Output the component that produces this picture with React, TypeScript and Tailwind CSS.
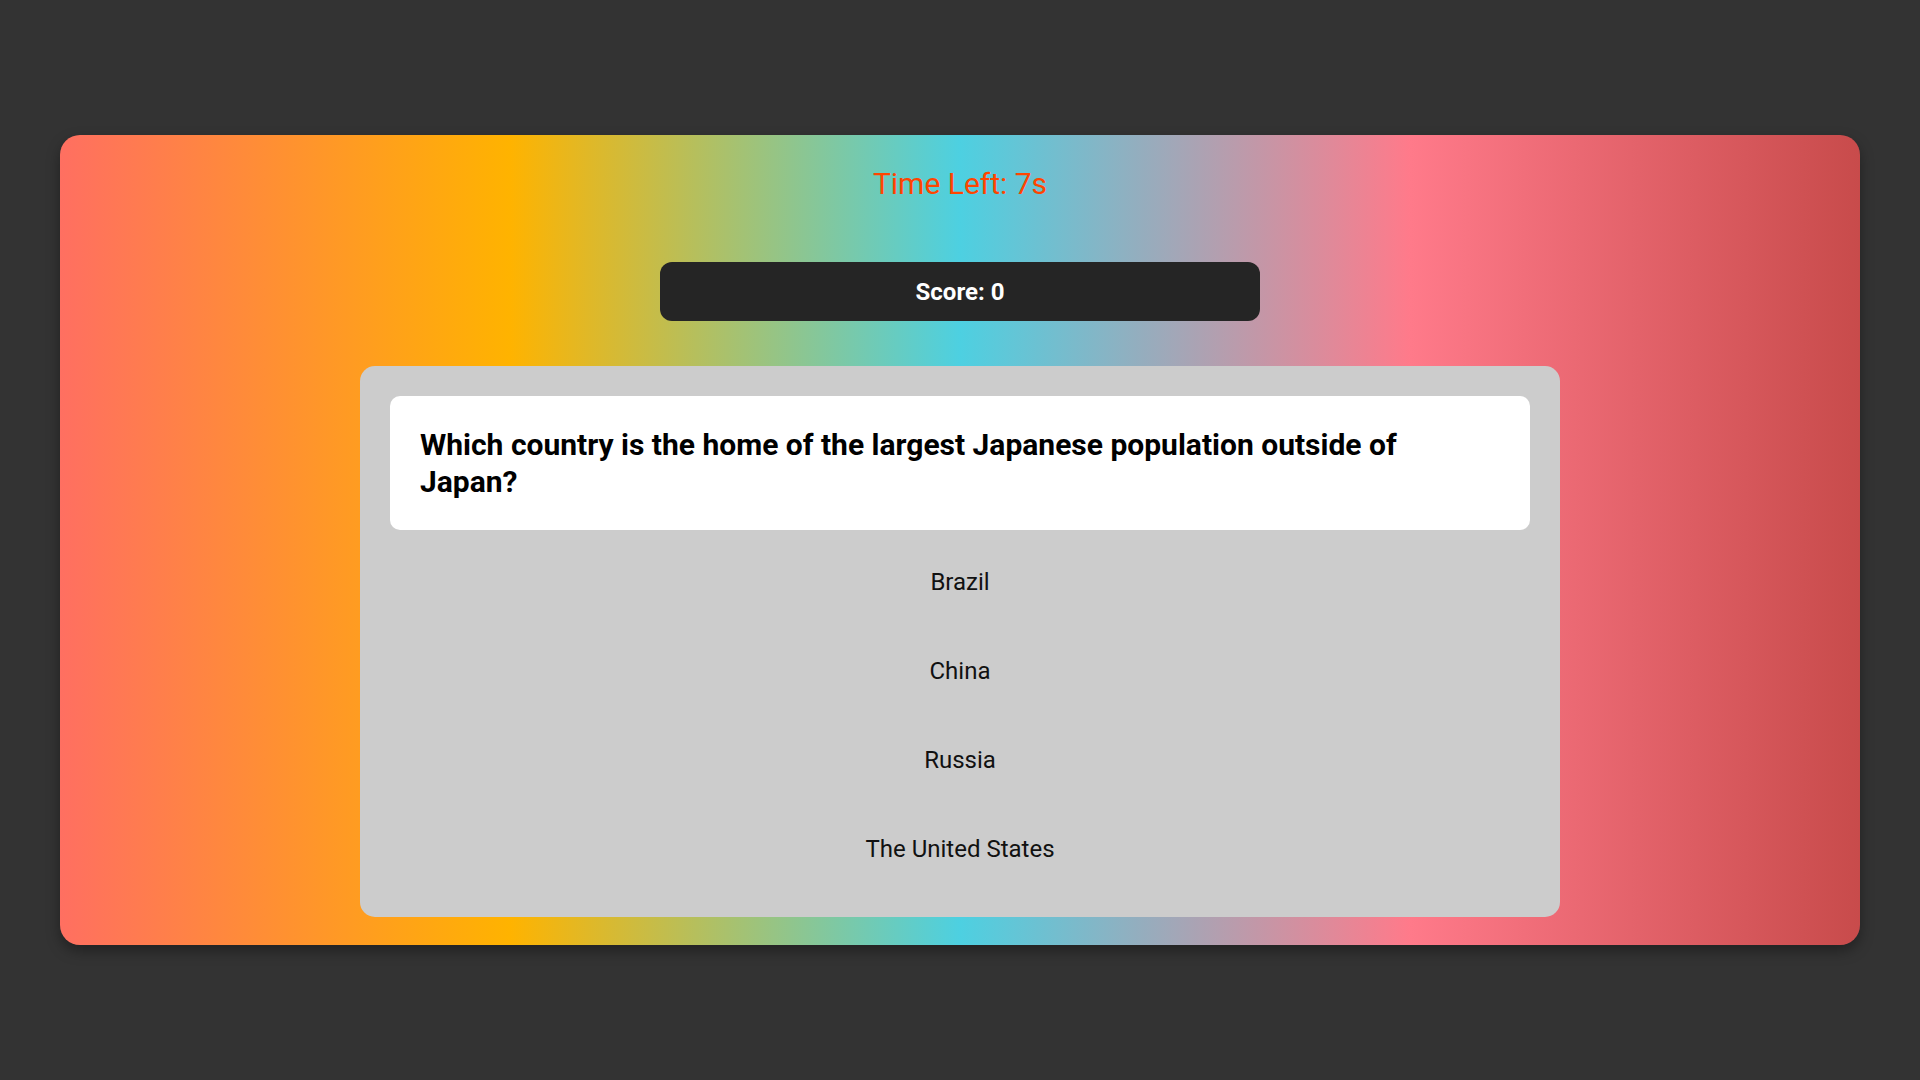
import React from 'react';

const options = ['Brazil', 'China', 'Russia', 'The United States'];

const App = () => {
  return (
    <div className="min-h-screen w-full bg-[#333333] flex items-center justify-center font-['Roboto',sans-serif]">
      <div className="w-[1800px] h-[810px] rounded-[20px] shadow-[0_6px_14px_rgba(0,0,0,0.35)] bg-[linear-gradient(to_right,#ff6f61_0%,#ffb300_25%,#4dd0e1_50%,#ff7a8a_75%,#c84b4b_100%)] flex flex-col items-center pt-[31px]">
        <div className="text-[30px] leading-[35px] text-[#ff4500]">Time Left: 7s</div>

        <div className="mt-[61px] w-[600px] h-[59px] rounded-[12px] bg-[#252525] flex items-center justify-center">
          <span className="text-[24px] font-bold text-white">Score: 0</span>
        </div>

        <div className="mt-[45px] w-[1200px] rounded-[15px] bg-[#cccccc] p-[30px]">
          <div className="bg-white rounded-[10px] p-[30px]">
            <h2 className="text-[30px] leading-[37px] font-bold text-black">
              Which country is the home of the largest Japanese population outside of Japan?
            </h2>
          </div>
          <div className="mt-[14px] flex flex-col gap-[13px]">
            {options.map((opt) => (
              <button
                key={opt}
                className="h-[76px] w-full flex items-center justify-center text-[24px] text-[#111111] bg-transparent"
              >
                {opt}
              </button>
            ))}
          </div>
        </div>
      </div>
    </div>
  );
};

export default App;
